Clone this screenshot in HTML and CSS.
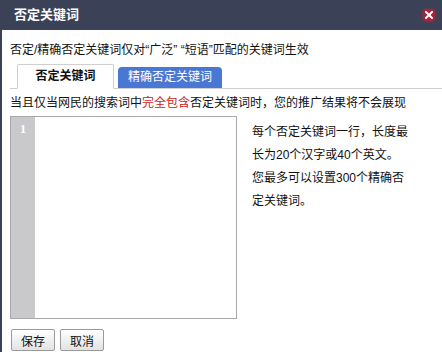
FILE: index.html
```html
<!DOCTYPE html>
<html lang="zh-CN">
<head>
    <meta charset="UTF-8">
    <title>否定关键词</title>
    <link rel="stylesheet" href="styles.css">
</head>
<body>

<div class="dialog">
    <!-- Title bar -->
    <div class="titlebar">
        <span class="title">否定关键词</span>
        <span class="close">
            <svg width="8" height="8" viewBox="0 0 8 8"><path d="M1 1L7 7M7 1L1 7" stroke="#fff" stroke-width="2" stroke-linecap="square"/></svg>
        </span>
    </div>

    <div class="content">
        <p class="note">否定/精确否定关键词仅对“广泛” “短语”匹配的关键词生效</p>

        <div class="tabs">
            <span class="tab active">否定关键词</span>
            <span class="tab">精确否定关键词</span>
        </div>

        <p class="desc">当且仅当网民的搜索词中<span class="red">完全包含</span>否定关键词时，您的推广结果将不会展现</p>

        <div class="editor-row">
            <div class="editor">
                <div class="gutter">1</div>
                <div class="area"></div>
            </div>
            <div class="tip">
                每个否定关键词一行，长度最长为20个汉字或40个英文。<br>
                您最多可以设置300个精确否定关键词。
            </div>
        </div>

        <div class="buttons">
            <button class="btn">保存</button>
            <button class="btn">取消</button>
        </div>
    </div>
</div>

</body>
</html>
```

FILE: styles.css
```css
/* General styles */
body {
    margin: 0;
    padding: 0;
    background-color: #fff;
    font-family: "Liberation Sans", "Noto Sans CJK SC", sans-serif;
    font-size: 12px;
    color: #111;
    overflow: hidden;
}

.dialog {
    width: 442px;
    height: 352px;
    background-color: #fff;
    border-left: 2px solid #3b4257;
    box-sizing: border-box;
}

.titlebar {
    height: 30px;
    margin-left: -2px;
    background-color: #3b4257;
    display: flex;
    align-items: center;
    justify-content: space-between;
    padding: 0 7px 0 14px;
}

.title {
    color: #fff;
    font-size: 13px;
    font-weight: bold;
    line-height: 16px;
}

.close {
    width: 12px;
    height: 12px;
    background-color: #a8223a;
    border-radius: 3px;
    box-shadow: 0 0 3px rgba(200, 40, 60, 0.7);
    display: flex;
    align-items: center;
    justify-content: center;
    margin-bottom: 1px;
}

.content {
    padding: 0 0 0 8px;
}

.note {
    margin: 12px 0 0 0;
    line-height: 16px;
    white-space: nowrap;
}

.tabs {
    display: flex;
    align-items: flex-end;
    gap: 4px;
    margin-top: 6px;
    padding-left: 7px;
    border-bottom: 1px solid #cfcfcf;
    height: 24px;
}

.tab {
    box-sizing: border-box;
    width: 104px;
    height: 21px;
    line-height: 21px;
    background-color: #4b77d4;
    color: #fff;
    border-radius: 4px 4px 0 0;
    text-align: center;
}

.tab.active {
    width: 97px;
    height: 25px;
    line-height: 23px;
    background-color: #fff;
    color: #111;
    font-weight: bold;
    border: 1px solid #cfcfcf;
    border-bottom: 1px solid #fff;
    margin-bottom: -1px;
    border-radius: 2px 2px 0 0;
}

.desc {
    margin: 6px 0 0 0;
    line-height: 16px;
    white-space: nowrap;
}

.red {
    color: #c41a1a;
}

.editor-row {
    display: flex;
    margin-top: 5px;
}

.editor {
    width: 225px;
    height: 201px;
    border: 1px solid #a8a8a8;
    display: flex;
}

.gutter {
    width: 24px;
    background-color: #c9c9cb;
    color: #fff;
    font-weight: bold;
    text-align: center;
    padding-top: 4px;
    line-height: 16px;
    font-family: "Liberation Serif", serif;
    font-size: 13px;
}

.area {
    flex: 1;
    background-color: #fff;
}

.tip {
    width: 158px;
    margin: 5px 0 0 15px;
    line-height: 23px;
}

.buttons {
    display: flex;
    gap: 5px;
    margin-top: 10px;
    padding-left: 1px;
}

.btn {
    width: 44px;
    height: 22px;
    padding: 0;
    font-family: "Noto Sans CJK SC", sans-serif;
    font-size: 12px;
    color: #111;
    border: 1px solid #9a9a9a;
    border-radius: 2px;
    background: linear-gradient(#ffffff, #e2e2e2);
}
```
